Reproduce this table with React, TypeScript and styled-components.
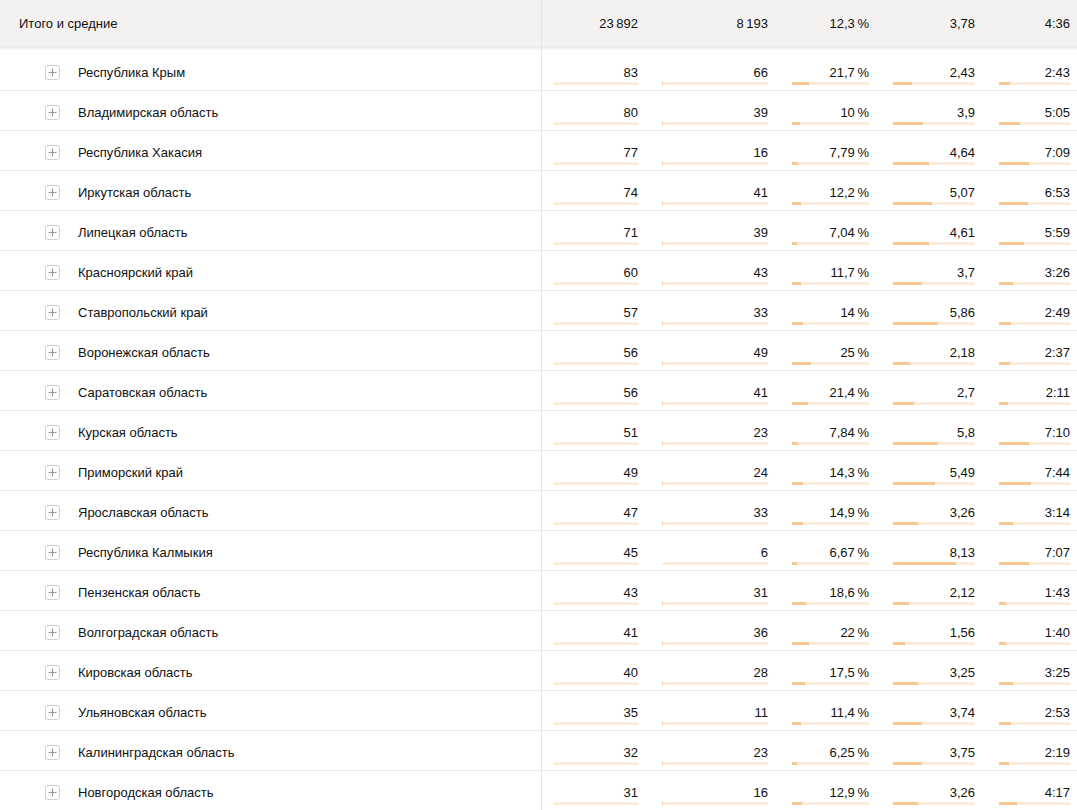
import React from 'react';
import styled, { createGlobalStyle } from 'styled-components';

const GlobalStyle = createGlobalStyle`
    html, body {
        margin: 0;
        padding: 0;
        background: #fff;
        overflow: hidden;
    }
    body {
        font-family: 'Liberation Sans', Arial, sans-serif;
        font-size: 13px;
        color: #111;
    }
`;

const COLUMNS = '542px 108px 130px 101px 106px 90px';

const NBSP = '\u2009';

type Region = {
    name: string;
    visits: number;
    users: number;
    bounce: number;
    depth: number;
    time: string;
};

const regions: Region[] = [
    { name: 'Республика Крым', visits: 83, users: 66, bounce: 21.7, depth: 2.43, time: '2:43' },
    { name: 'Владимирская область', visits: 80, users: 39, bounce: 10, depth: 3.9, time: '5:05' },
    { name: 'Республика Хакасия', visits: 77, users: 16, bounce: 7.79, depth: 4.64, time: '7:09' },
    { name: 'Иркутская область', visits: 74, users: 41, bounce: 12.2, depth: 5.07, time: '6:53' },
    { name: 'Липецкая область', visits: 71, users: 39, bounce: 7.04, depth: 4.61, time: '5:59' },
    { name: 'Красноярский край', visits: 60, users: 43, bounce: 11.7, depth: 3.7, time: '3:26' },
    { name: 'Ставропольский край', visits: 57, users: 33, bounce: 14, depth: 5.86, time: '2:49' },
    { name: 'Воронежская область', visits: 56, users: 49, bounce: 25, depth: 2.18, time: '2:37' },
    { name: 'Саратовская область', visits: 56, users: 41, bounce: 21.4, depth: 2.7, time: '2:11' },
    { name: 'Курская область', visits: 51, users: 23, bounce: 7.84, depth: 5.8, time: '7:10' },
    { name: 'Приморский край', visits: 49, users: 24, bounce: 14.3, depth: 5.49, time: '7:44' },
    { name: 'Ярославская область', visits: 47, users: 33, bounce: 14.9, depth: 3.26, time: '3:14' },
    { name: 'Республика Калмыкия', visits: 45, users: 6, bounce: 6.67, depth: 8.13, time: '7:07' },
    { name: 'Пензенская область', visits: 43, users: 31, bounce: 18.6, depth: 2.12, time: '1:43' },
    { name: 'Волгоградская область', visits: 41, users: 36, bounce: 22, depth: 1.56, time: '1:40' },
    { name: 'Кировская область', visits: 40, users: 28, bounce: 17.5, depth: 3.25, time: '3:25' },
    { name: 'Ульяновская область', visits: 35, users: 11, bounce: 11.4, depth: 3.74, time: '2:53' },
    { name: 'Калининградская область', visits: 32, users: 23, bounce: 6.25, depth: 3.75, time: '2:19' },
    { name: 'Новгородская область', visits: 31, users: 16, bounce: 12.9, depth: 3.26, time: '4:17' },
];

const fmt = (n: number): string => String(n).replace('.', ',');

const toSeconds = (t: string): number => {
    const [m, s] = t.split(':').map(Number);
    return m * 60 + s;
};

const Page = styled.div`
    width: 1077px;
    display: flex;
    flex-direction: column;
`;

const HeaderRow = styled.div`
    display: grid;
    grid-template-columns: ${COLUMNS};
    height: 46px;
    box-sizing: border-box;
    padding-top: 1px;
    background-color: #f4f2f0;
`;

const HeaderShadow = styled.div`
    display: grid;
    grid-template-columns: ${COLUMNS};
    height: 5px;
    background: linear-gradient(to bottom, rgba(0, 0, 0, 0.09), rgba(0, 0, 0, 0));
`;

const ShadowCell = styled.div<{ $divider?: boolean }>`
    border-right: ${(p) => (p.$divider ? '1px solid #e4e4e4' : 'none')};
`;

const HeaderTitle = styled.div`
    display: flex;
    align-items: center;
    padding-left: 19px;
    border-right: 1px solid #e4e4e4;
    line-height: 16px;
`;

const HeaderValue = styled.div<{ $last?: boolean }>`
    display: flex;
    align-items: center;
    justify-content: flex-end;
    padding: 0 ${(p) => (p.$last ? '7px' : '12px')} 0 12px;
    line-height: 16px;
`;

const Row = styled.div`
    display: grid;
    grid-template-columns: ${COLUMNS};
    height: 40px;
    box-sizing: border-box;
    border-bottom: 1px solid #ebebeb;
`;

const NameCell = styled.div`
    display: flex;
    align-items: flex-start;
    gap: 18px;
    padding: 14px 0 0 45px;
    border-right: 1px solid #e4e4e4;
    line-height: 16px;
`;

const ExpandButton = styled.div`
    width: 15px;
    height: 15px;
    box-sizing: border-box;
    border: 1px solid #d0d0d0;
    border-radius: 3px;
    flex-shrink: 0;
    display: flex;
    align-items: center;
    justify-content: center;
    color: #9a9a9a;
`;

const ValueCell = styled.div<{ $last?: boolean }>`
    display: flex;
    flex-direction: column;
    padding: 14px ${(p) => (p.$last ? '7px' : '12px')} 0 12px;
`;

const ValueText = styled.div`
    text-align: right;
    line-height: 16px;
    white-space: nowrap;
`;

const Bar = styled.div`
    margin-top: 1px;
    height: 3px;
    background-color: #fcecdb;
`;

const BarFill = styled.div`
    height: 100%;
    background-color: #f6c791;
`;

const PlusIcon: React.FC = () => (
    <svg width="9" height="9" viewBox="0 0 9 9">
        <path d="M4.5 0.5v8M0.5 4.5h8" stroke="currentColor" strokeWidth="1.2" />
    </svg>
);

const Value: React.FC<{ text: string; share: number; last?: boolean }> = ({ text, share, last }) => (
    <ValueCell $last={last}>
        <ValueText>{text}</ValueText>
        <Bar>
            <BarFill style={{ width: `${Math.min(100, share * 100)}%` }} />
        </Bar>
    </ValueCell>
);

const App: React.FC = () => (
    <>
        <GlobalStyle />
        <Page>
            <HeaderRow>
                <HeaderTitle>Итого и средние</HeaderTitle>
                <HeaderValue>{`23${NBSP}892`}</HeaderValue>
                <HeaderValue>{`8${NBSP}193`}</HeaderValue>
                <HeaderValue>{`12,3${NBSP}%`}</HeaderValue>
                <HeaderValue>3,78</HeaderValue>
                <HeaderValue $last>4:36</HeaderValue>
            </HeaderRow>
            <HeaderShadow>
                <ShadowCell $divider />
                <ShadowCell />
            </HeaderShadow>
            {regions.map((r) => (
                <Row key={r.name}>
                    <NameCell>
                        <ExpandButton>
                            <PlusIcon />
                        </ExpandButton>
                        <span>{r.name}</span>
                    </NameCell>
                    <Value text={String(r.visits)} share={0} />
                    <Value text={String(r.users)} share={r.users / 8193} />
                    <Value text={`${fmt(r.bounce)}${NBSP}%`} share={r.bounce / 100} />
                    <Value text={fmt(r.depth)} share={r.depth / 10.6} />
                    <Value text={r.time} share={toSeconds(r.time) / 1020} last />
                </Row>
            ))}
        </Page>
    </>
);

export default App;
